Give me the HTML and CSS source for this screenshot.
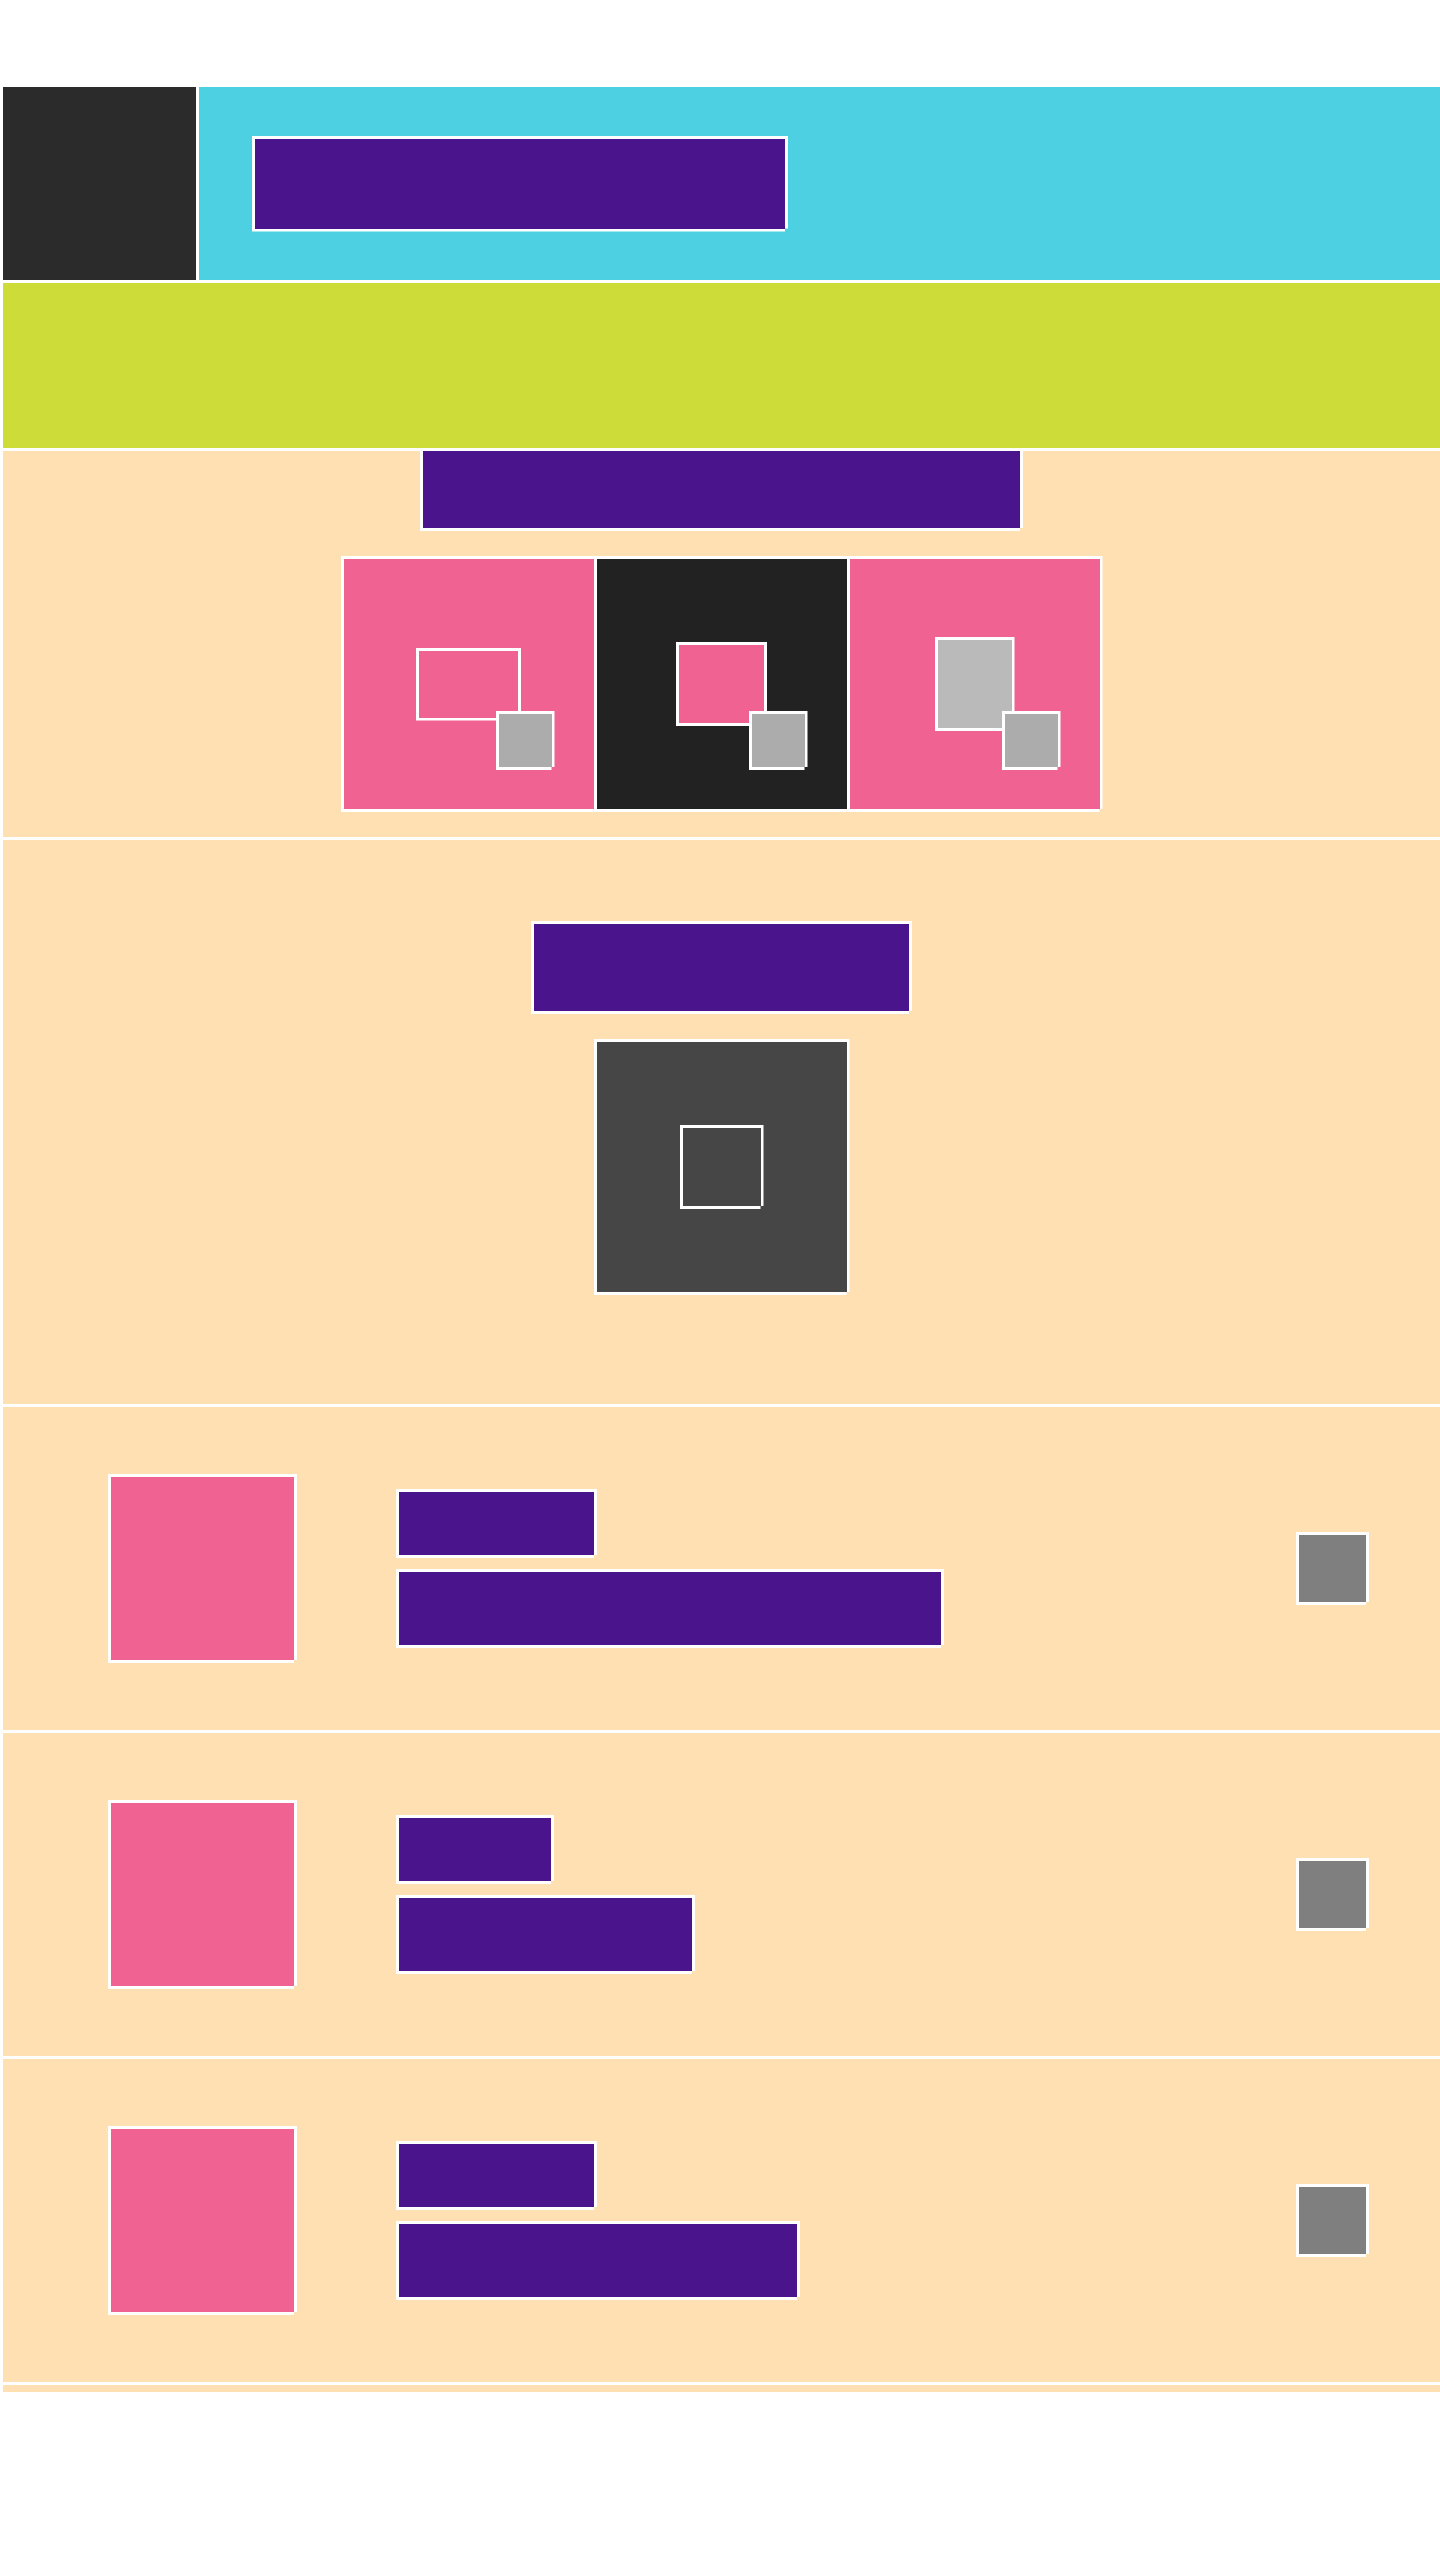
FILE: index.html
```html
<!DOCTYPE html>
<html lang="en">
<head>
<meta charset="utf-8">
<title>Wireframe</title>
<link rel="stylesheet" href="styles.css">
</head>
<body>
<div class="page">
  <header class="topbar">
    <div class="logo"></div>
    <div class="brand">
      <div class="brand-title box"></div>
    </div>
  </header>

  <section class="hero"></section>

  <section class="gallery">
    <div class="heading heading-gallery box"></div>
    <div class="cards">
      <div class="card card-pink box">
        <div class="shape shape-landscape box"></div>
        <div class="chip box"></div>
      </div>
      <div class="card card-dark box">
        <div class="shape shape-portrait box"></div>
        <div class="chip box"></div>
      </div>
      <div class="card card-pink box">
        <div class="shape shape-tall box"></div>
        <div class="chip box"></div>
      </div>
    </div>
  </section>

  <section class="feature">
    <div class="heading heading-feature box"></div>
    <div class="feature-panel box">
      <div class="feature-icon box"></div>
    </div>
  </section>

  <div class="item">
    <div class="thumb box"></div>
    <div class="text">
      <div class="line line-title w-195 box"></div>
      <div class="line line-body w-542 box"></div>
    </div>
    <div class="action box"></div>
  </div>

  <div class="item">
    <div class="thumb box"></div>
    <div class="text">
      <div class="line line-title w-152 box"></div>
      <div class="line line-body w-293 box"></div>
    </div>
    <div class="action box"></div>
  </div>

  <div class="item">
    <div class="thumb box"></div>
    <div class="text">
      <div class="line line-title w-195 box"></div>
      <div class="line line-body w-398 box"></div>
    </div>
    <div class="action box"></div>
  </div>

  <div class="strip"></div>
</div>
</body>
</html>
```

FILE: styles.css
```css
* {
  box-sizing: border-box;
  margin: 0;
  padding: 0;
}

html,
body {
  background: #ffffff;
  overflow: hidden;
}

body {
  font-family: "Liberation Sans", Arial, sans-serif;
}

.page {
  margin: 87px 0 0 3px;
  width: 1437px;
  display: flex;
  flex-direction: column;
  gap: 3px;
}

/* white frame drawn outside each block, with the small notch at the bottom-right corner */
.box {
  outline: 3px solid #ffffff;
  clip-path: polygon(-3px -3px, calc(100% + 3px) -3px, calc(100% + 3px) 100%, 100% 100%, 100% calc(100% + 3px), -3px calc(100% + 3px));
}

/* header */
.topbar {
  display: flex;
  gap: 3px;
  height: 193px;
}

.logo {
  flex: none;
  width: 193px;
  background: #2b2b2b;
}

.brand {
  flex: 1;
  background: #4dd0e1;
  display: flex;
  align-items: center;
  padding-left: 56px;
}

.brand-title {
  width: 530px;
  height: 90px;
  background: #4a148c;
}

/* hero */
.hero {
  height: 165px;
  background: #cddc39;
}

/* gallery */
.gallery {
  height: 386px;
  background: #ffe0b2;
  display: flex;
  flex-direction: column;
  align-items: center;
}

.heading {
  background: #4a148c;
}

.heading-gallery {
  width: 597px;
  height: 77px;
}

.cards {
  display: flex;
  gap: 3px;
  margin-top: 31px;
}

.card {
  position: relative;
  width: 250px;
  height: 250px;
  display: flex;
  align-items: center;
  justify-content: center;
}

.card-pink {
  background: #f06292;
}

.card-dark {
  background: #222222;
}

.shape-landscape {
  width: 99px;
  height: 67px;
  background: #f06292;
}

.shape-portrait {
  width: 85px;
  height: 78px;
  background: #f06292;
}

.shape-tall {
  width: 74px;
  height: 88px;
  background: #bababa;
}

.chip {
  position: absolute;
  right: 42px;
  bottom: 42px;
  width: 53px;
  height: 53px;
  background: #acacac;
}

/* feature */
.feature {
  height: 564px;
  background: #ffe0b2;
  display: flex;
  flex-direction: column;
  align-items: center;
  padding-top: 84px;
}

.heading-feature {
  width: 375px;
  height: 87px;
}

.feature-panel {
  margin-top: 31px;
  width: 250px;
  height: 250px;
  background: #464646;
  display: flex;
  align-items: center;
  justify-content: center;
}

.feature-icon {
  width: 78px;
  height: 78px;
  background: #464646;
}

/* list items */
.item {
  height: 323px;
  background: #ffe0b2;
  display: flex;
  align-items: center;
  padding: 0 74px 0 108px;
}

.thumb {
  flex: none;
  width: 183px;
  height: 183px;
  background: #f06292;
}

.text {
  flex: 1;
  margin-left: 105px;
  display: flex;
  flex-direction: column;
  align-items: flex-start;
  gap: 17px;
}

.line {
  background: #4a148c;
}

.line-title {
  height: 63px;
}

.line-body {
  height: 73px;
}

.w-152 { width: 152px; }
.w-195 { width: 195px; }
.w-293 { width: 293px; }
.w-398 { width: 398px; }
.w-542 { width: 542px; }

.action {
  flex: none;
  width: 67px;
  height: 67px;
  background: #7f7f7f;
}

.strip {
  height: 7px;
  background: #ffe0b2;
}
```
